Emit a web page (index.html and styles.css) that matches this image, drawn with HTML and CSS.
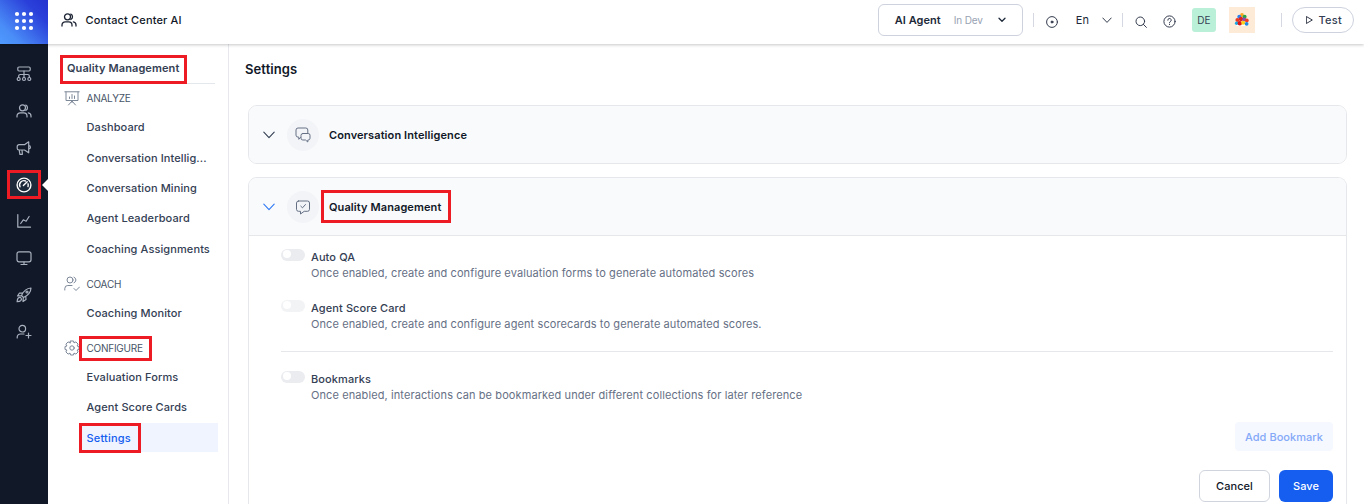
FILE: index.html
```
<!DOCTYPE html>
<html lang="en">
<head>
<meta charset="utf-8">
<title>Contact Center AI</title>
<link rel="stylesheet" href="styles.css">
</head>
<body>
<header class="topbar">
  <div class="launcher">
    <svg class="dots" width="20" height="20" viewBox="0 0 20 20"><circle cx="3" cy="3" r="2.1"/><circle cx="10" cy="3" r="2.1"/><circle cx="17" cy="3" r="2.1"/><circle cx="3" cy="10" r="2.1"/><circle cx="10" cy="10" r="2.1"/><circle cx="17" cy="10" r="2.1"/><circle cx="3" cy="17" r="2.1"/><circle cx="10" cy="17" r="2.1"/><circle cx="17" cy="17" r="2.1"/></svg>
  </div>
  <svg class="brand-icon ic" width="16" height="16" viewBox="0 0 16 16"><circle cx="6.500" cy="4.800" r="3"/><path d="M9.800 2.100a3 3 0 0 1 0 5.400M1 14v-1a3.200 3.200 0 0 1 3.200-3.200h3.600A3.200 3.200 0 0 1 11 13v1M12.300 9.900A3.200 3.200 0 0 1 15 13v1"/></svg>
  <span class="brand">Contact Center AI</span>
  <div class="tools">
    <div class="agent">
      <span class="agent-name">AI Agent</span>
      <span class="agent-env">In Dev</span>
      <svg class="agent-chev" width="8" height="6" viewBox="0 0 8 6"><path d="M1 1.200l3 3 3-3"/></svg>
    </div>
    <i class="sep sep-a"></i>
    <svg class="ic thin target" width="12" height="12" viewBox="0 0 12 12"><circle cx="6" cy="6" r="5.400"/><circle cx="6" cy="6" r="1" fill="#333b4d"/></svg>
    <span class="lang">En</span>
    <svg class="ic thin lang-chev" width="10" height="7" viewBox="0 0 10 7"><path d="M.8 1L5 5.400 9.200 1"/></svg>
    <i class="sep sep-b"></i>
    <svg class="ic thin search" width="12" height="12" viewBox="0 0 12 12"><circle cx="5.300" cy="5.300" r="4.300"/><path d="M8.400 8.400l3 3"/></svg>
    <svg class="ic thin help" width="13" height="13" viewBox="0 0 13 13"><circle cx="6.500" cy="6.500" r="5.600"/><path d="M4.800 5.200a1.700 1.700 0 1 1 2.400 1.500c-.5.3-.7.5-.7 1.100M6.500 9.300v.3"/></svg>
    <span class="initials">DE</span>
    <span class="avatar">
      <svg width="16" height="16" viewBox="0 0 16 16"><path d="M2 13L5 3l5-1 4 9-2 3H3z" fill="#fff"/><circle cx="8" cy="3" r="1.900" fill="#f6a51c"/><circle cx="5.300" cy="4.800" r="2" fill="#2f80ed"/><circle cx="10.600" cy="4.800" r="2" fill="#27a347"/><circle cx="3.400" cy="8" r="2" fill="#e63a24"/><circle cx="7" cy="7" r="2.200" fill="#dd2222"/><circle cx="10.300" cy="7.500" r="2" fill="#8a49b5"/><circle cx="12.800" cy="8.500" r="1.900" fill="#ef3d25"/><circle cx="2.600" cy="11.300" r="1.700" fill="#18a8e5"/><circle cx="5.800" cy="11.200" r="2.200" fill="#d91616"/><circle cx="9.200" cy="10.800" r="2" fill="#ffcf17"/><circle cx="12.600" cy="11.800" r="1.900" fill="#2088e0"/></svg>
    </span>
    <i class="sep sep-c"></i>
    <div class="test"><svg class="ic play" width="7" height="8" viewBox="0 0 7 8"><path d="M.7.7L6.300 4 .7 7.300z"/></svg><span>Test</span></div>
  </div>
</header>
<div class="body">
  <nav class="rail">
    <svg class="ric" viewBox="0 0 16 16"><rect x="1.800" y="1" width="12.400" height="4" rx="1.200"/><path d="M8 5v6.500M2.700 11.500V10A1.500 1.500 0 0 1 4.200 8.500h7.600A1.500 1.500 0 0 1 13.300 10v1.500"/><circle cx="2.700" cy="13" r="1.500"/><circle cx="8" cy="13" r="1.500"/><circle cx="13.300" cy="13" r="1.500"/></svg>
    <svg class="ric" viewBox="0 0 16 16"><circle cx="6.500" cy="4.800" r="3"/><path d="M9.800 2.100a3 3 0 0 1 0 5.400M1 14v-1a3.200 3.200 0 0 1 3.200-3.200h3.600A3.200 3.200 0 0 1 11 13v1M12.300 9.900A3.200 3.200 0 0 1 15 13v1"/></svg>
    <svg class="ric" viewBox="0 0 16 16"><path d="M12.700 1.800v11L8.500 10H3A1.800 1.800 0 0 1 1.200 8.200V6.500A1.800 1.800 0 0 1 3 4.700h5.500zM12.700 5.700c2.300 0 2.300 3.200 0 3.200M3.200 10l.7 4.300h2.500L6 10"/></svg>
    <div class="active"><svg class="ric" viewBox="0 0 16 16"><circle cx="8" cy="8" r="6.900"/><path d="M4 9.800A4.300 4.300 0 0 1 9.500 4M12 6.800a4.300 4.300 0 0 1 0 2.700M7.400 8.600l3.800-3.800"/></svg></div>
    <svg class="ric" viewBox="0 0 16 16"><path d="M1.800 1.500v12.700h12.700M4.700 10.500l2.600-3.700 2.800 1.500 3-4.800"/></svg>
    <svg class="ric" viewBox="0 0 16 16"><rect x="1" y="1.800" width="14" height="10" rx="2"/><path d="M8 12v2.500M5 14.500h6"/></svg>
    <svg class="ric" viewBox="0 0 16 16"><path d="M5.500 8.500C7.500 4 10.500 1.300 15 1c-.2 4.500-3 7.500-7.500 9.500zM6.500 6.200L3.500 6 1.500 9l3.800-.3M9.800 9.500l.2 3-3 2 .3-3.800"/><path d="M2.300 11c-1 1-1.200 3.700-1.200 3.700s2.700-.2 3.700-1.200c1.800-2-.5-4.300-2.500-2.500z"/><circle cx="11" cy="5" r="1"/></svg>
    <svg class="ric" viewBox="0 0 16 16"><circle cx="6.300" cy="4.700" r="3.300"/><path d="M1.200 14v-.8a3.200 3.200 0 0 1 3.200-3.200H8M12.500 9v5M10 11.500h5"/></svg>
  </nav>
  <aside class="subnav">
    <div class="subnav-title">Quality Management</div>
    <h3><svg class="hic" viewBox="0 0 16 16"><path d="M.8 1.800h14.400M2 2v8.500h12V2M8 10.500v2M8 11l-3.500 4M8 11l3.500 4M5.500 7v1.500M8 4.500v4M10.500 6v2.500"/></svg>ANALYZE</h3>
    <a>Dashboard</a>
    <a>Conversation Intellig...</a>
    <a>Conversation Mining</a>
    <a>Agent Leaderboard</a>
    <a>Coaching Assignments</a>
    <h3><svg class="hic" viewBox="0 0 16 16"><circle cx="6" cy="4" r="3"/><path d="M10 1.200a3 3 0 0 1 0 5.600M.8 14v-1.500a3 3 0 0 1 3-3H8M10 12.500l2 2 3.500-3.500"/></svg>COACH</h3>
    <a>Coaching Monitor</a>
    <h3><svg class="hic" viewBox="0 0 16 16"><path d="M6.500 1h3l.5 1.900 1.900-1 2.200 2.200-1 1.900 1.900.5v3l-1.900.5 1 1.900-2.200 2.200-1.900-1L9.500 15h-3L6 13.100l-1.900 1-2.200-2.200 1-1.900L1 9.500v-3L2.900 6l-1-1.900 2.200-2.200 1.900 1z"/><circle cx="8" cy="8" r="2.200"/></svg>CONFIGURE</h3>
    <a>Evaluation Forms</a>
    <a>Agent Score Cards</a>
    <a class="selected">Settings</a>
  </aside>
  <main>
    <h1>Settings</h1>
    <section class="card">
      <div class="card-head">
        <svg class="chev" viewBox="0 0 12 8"><path d="M.8 1.200L6 6.600l5.200-5.400"/></svg>
        <span class="disc"><svg class="dic" viewBox="0 0 16 16"><path d="M5.500 10.500l-1.700 1.800v-2.200H3A2 2 0 0 1 1 8.100V3a2 2 0 0 1 2-2h7.800a2 2 0 0 1 2 2v3"/><path d="M7.800 6.500h5.400A1.800 1.800 0 0 1 15 8.300v2.900a1.800 1.800 0 0 1-1.800 1.800h-.4v2l-2.300-2H7.800A1.800 1.800 0 0 1 6 11.200V8.300A1.800 1.800 0 0 1 7.800 6.500z"/></svg></span>
        <h2>Conversation Intelligence</h2>
      </div>
    </section>
    <section class="card open">
      <div class="card-head">
        <svg class="chev" viewBox="0 0 12 8"><path d="M.8 1.200L6 6.600l5.200-5.400"/></svg>
        <span class="disc"><svg class="dic" viewBox="0 0 16 16"><path d="M3.500 2h9a2 2 0 0 1 2 2v6.300a2 2 0 0 1-2 2H9.200L5.500 15v-2.700h-2a2 2 0 0 1-2-2V4a2 2 0 0 1 2-2zM5.800 7.200l1.700 1.600L10.500 5.500"/></svg></span>
        <h2>Quality Management</h2>
      </div>
      <div class="card-body">
        <div class="opt"><i class="switch"></i><div><b>Auto QA</b><p>Once enabled, create and configure evaluation forms to generate automated scores</p></div></div>
        <div class="opt off"><i class="switch"></i><div><b>Agent Score Card</b><p>Once enabled, create and configure agent scorecards to generate automated scores.</p></div></div>
        <div class="opt last"><i class="switch"></i><div><b>Bookmarks</b><p>Once enabled, interactions can be bookmarked under different collections for later reference</p></div></div>
        <div class="row-add"><button class="add">Add Bookmark</button></div>
        <div class="row-act"><button class="cancel">Cancel</button><button class="save">Save</button></div>
      </div>
    </section>
  </main>
</div>
<i class="mark m-title"></i><i class="mark m-rail"></i><i class="mark m-conf"></i><i class="mark m-set"></i><i class="mark m-card"></i>
</body>
</html>
```
FILE: styles.css
```
* { box-sizing: border-box; }
body { margin: 0; width: 1364px; height: 504px; overflow: hidden; background: #fff; font-family: Inter, sans-serif; font-size: 11px; letter-spacing: .1px; color: #344054; }
h1, h2, h3, p { margin: 0; }
svg { display: block; flex: none; fill: none; stroke-linecap: round; stroke-linejoin: round; }
.topbar { position: relative; z-index: 2; display: flex; align-items: center; height: 44px; padding-bottom: 4px; background: #fff; box-shadow: 0 1px 3px rgba(0,0,0,.22); }
.launcher { display: grid; place-items: center; width: 48px; height: 44px; margin-bottom: -4px; padding-bottom: 3px; background: linear-gradient(45deg, #4f9bff 0%, #4a8df8 22%, #2a3fd9 75%, #2433cf 100%); }
.dots { fill: #fff; }
.ic { stroke: #1d2433; stroke-width: 1.3; }
.thin { stroke: #333b4d; stroke-width: 1; }
.brand-icon { margin-left: 13px; }
.brand { margin-left: 8.500px; font-weight: 500; letter-spacing: .15px; color: #101828; }
.tools { display: flex; align-items: center; margin-left: auto; padding-right: 10px; }
.agent { display: flex; align-items: center; width: 145px; height: 32px; padding-left: 16px; border: 1px solid #cdd2de; border-radius: 6px; }
.agent-name { font-weight: 600; letter-spacing: .04px; color: #1d2939; }
.agent-env { margin-left: 13px; font-size: 10px; letter-spacing: -.15px; color: #98a2b3; }
.agent-chev { margin-left: 15px; stroke: #1d2939; stroke-width: 1.3; }
.sep { width: 1px; height: 14px; background: #d5d8e0; }
.sep-a { margin-left: 10px; }
.target { margin: 3px 0 0 12px; }
.lang { margin-left: 18px; color: #1d2939; }
.lang-chev { margin-left: 13px; }
.sep-b { margin-left: 10px; }
.search { margin: 3px 0 0 12px; }
.help { margin: 3px 0 0 16px; }
.initials { display: grid; place-items: center; width: 24px; height: 24px; margin-left: 16px; border-radius: 3px; background: #baf0d8; color: #344054; font-size: 10px; }
.avatar { display: grid; place-items: center; width: 26px; height: 26px; margin-left: 13px; background: #fdebd8; }
.sep-c { margin-left: 26px; }
.test { display: flex; align-items: center; width: 62px; height: 26px; margin-left: 10px; padding-left: 13px; gap: 5.500px; border: 1px solid #cdd2de; border-radius: 13px; font-weight: 500; letter-spacing: .25px; }
.play { stroke-width: .9; }
.body { display: flex; height: 460px; }
.rail { display: flex; flex-direction: column; align-items: center; width: 48px; padding-top: 22px; gap: 21px; background: #111827; }
.ric { width: 16px; height: 16px; stroke: #aab2c0; stroke-width: 1.2; }
.active { position: relative; display: grid; place-items: center; width: 48px; height: 28px; margin: -6px 0 -7px; }
.active::before { content: ""; position: absolute; inset: 0 8px; background: #1d2a39; }
.active .ric { position: relative; stroke: #fff; stroke-width: 1.4; }
.active::after { content: ""; position: absolute; right: 0; top: 8px; border: 6px solid transparent; border-right-color: #fff; border-left: 0; }
.subnav { width: 181px; border-right: 1px solid #e6e8ee; }
.subnav-title { display: flex; align-items: center; height: 40px; margin: 0 13px 0 12px; padding: 9px 0 0 7px; border-bottom: 1px solid #e4e7ec; font-weight: 600; }
.subnav h3 { display: flex; align-items: center; height: 28px; margin-top: 7px; padding-left: 16px; gap: 6.500px; font-size: 10px; letter-spacing: -.25px; font-weight: 400; color: #475467; }
.subnav-title + h3 { margin-top: .4px; }
.hic { width: 16px; height: 16px; stroke: #7c8798; stroke-width: 1; }
.subnav a { display: flex; align-items: center; height: 29px; margin: 0 10px 1.400px 31px; padding: .8px 0 0 7.500px; font-weight: 500; }
.subnav .selected { background: #eff4ff; color: #155eef; letter-spacing: .2px; }
main { flex: 1; padding: 16px 17px 0 19px; }
h1 { margin-left: -3px; font-size: 13px; line-height: 18px; font-weight: 600; color: #101828; }
.card { border: 1px solid #e5e7eb; border-radius: 9px; overflow: hidden; }
h1 + .card { margin-top: 27px; }
.card + .card { margin-top: 13px; }
.card.open { height: 327px; border-bottom: 0; border-radius: 9px 9px 0 0; }
.card-head { display: flex; align-items: center; height: 57px; padding-left: 14px; background: #f9fafb; }
.open .card-head { height: 58px; border-bottom: 1px solid #e5e7eb; }
.chev { width: 12px; height: 8px; stroke: #344054; stroke-width: 1.100; }
.open .chev { stroke: #2f7af5; }
.disc { display: grid; place-items: center; width: 32px; height: 32px; margin-left: 12px; border-radius: 50%; background: #f2f4f7; }
.dic { width: 16px; height: 16px; stroke: #667085; stroke-width: 1; }
h2 { margin-left: 10px; font-size: 11px; font-weight: 600; color: #101828; }
.card-body { padding: 13px 13px 0 32px; }
.opt { display: flex; gap: 6px; height: 51px; }
.opt b { display: inline-block; font-weight: 500; line-height: 16px; color: #344054; }
.opt p { line-height: 16px; color: #667085; }
.switch { width: 24px; height: 12px; border-radius: 6px; background: #eaecf0; }
.switch::before { content: ""; display: block; width: 8px; height: 8px; margin: 1px 0 0 2px; border-radius: 50%; background: #fff; }
.off .switch { opacity: .6; }
.off { height: 52px; border-bottom: 1px solid #e5e7eb; }
.last { margin-top: 19px; }
.row-add, .row-act { display: flex; justify-content: flex-end; }
button { padding: 0; font: 500 11px Inter, sans-serif; letter-spacing: .05px; }
.add { width: 98px; height: 29px; border: 0; border-radius: 4px; background: #f5f8ff; color: #84a9f8; }
.row-act { margin-top: 19px; gap: 9px; }
.cancel { width: 71px; height: 32px; border: 1px solid #d0d5dd; border-radius: 6px; background: #fff; color: #101828; }
.save { width: 54px; height: 32px; border: 0; border-radius: 6px; background: #155eef; color: #fff; }
.mark { position: absolute; z-index: 5; border: 3px solid #ed1c24; }
.m-title { left: 60px; top: 55px; width: 127px; height: 29px; }
.m-rail { left: 7px; top: 170px; width: 34px; height: 29px; }
.m-conf { left: 79px; top: 336px; width: 73px; height: 25px; }
.m-set { left: 79px; top: 423px; width: 62px; height: 30px; }
.m-card { left: 321px; top: 190px; width: 130px; height: 33px; }
```
